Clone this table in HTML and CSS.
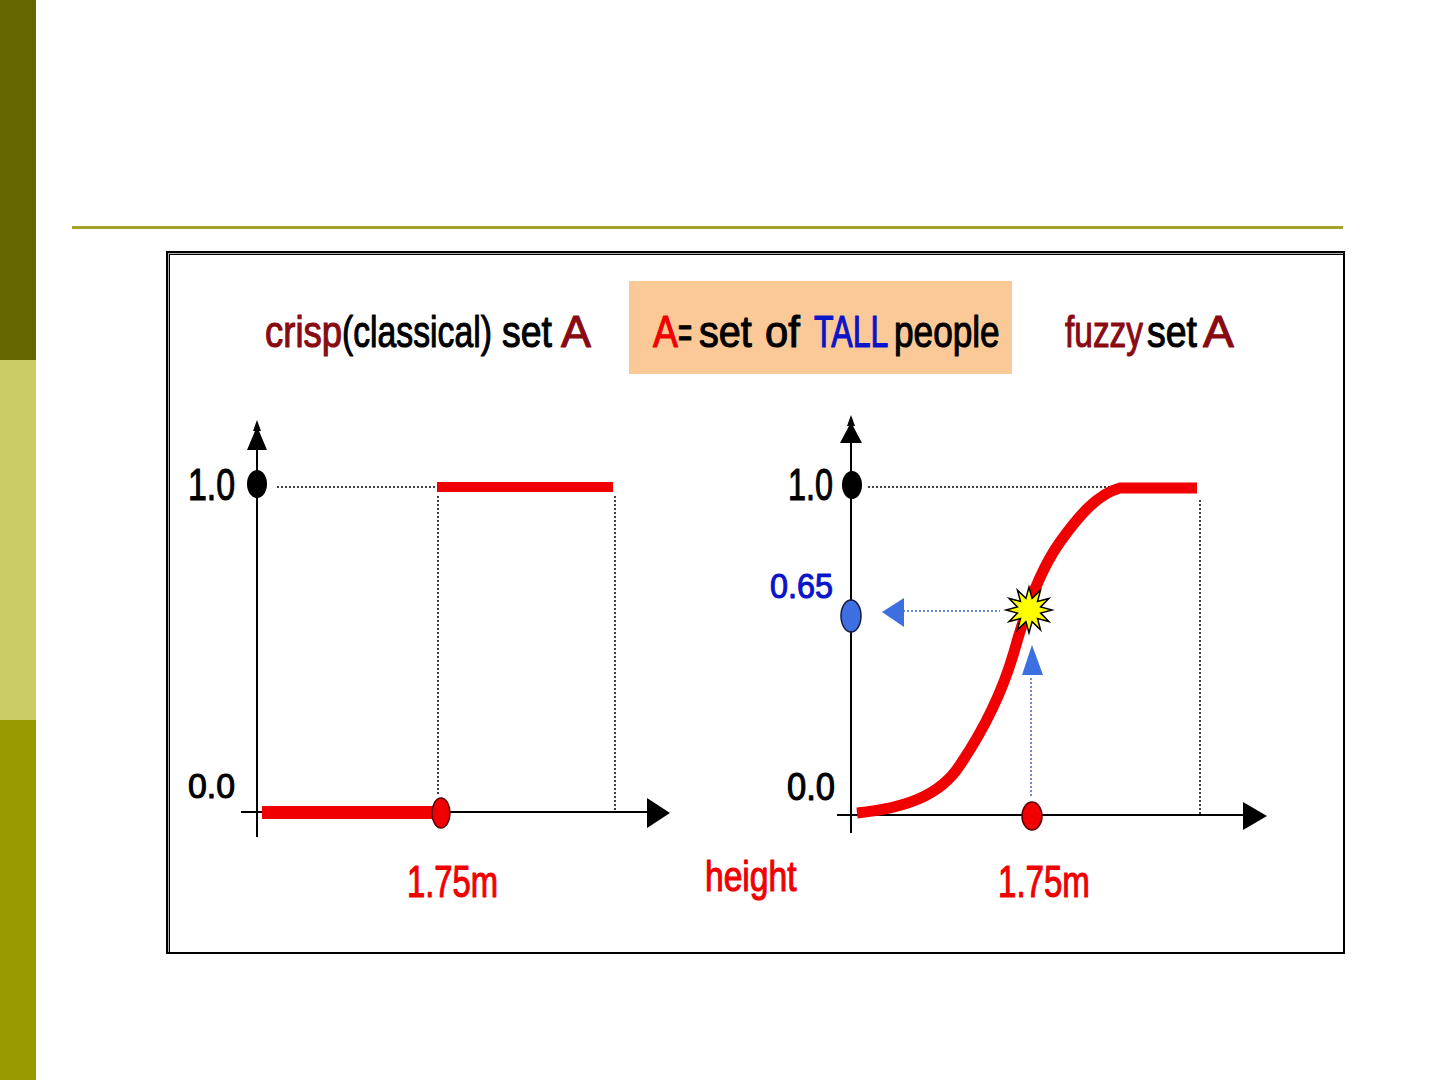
FILE: index.html
```html
<!DOCTYPE html>
<html>
<head>
<meta charset="utf-8">
<link rel="stylesheet" href="styles.css">
</head>
<body>
<div class="page">
  <div class="sidebar">
    <div class="band band-dark"></div>
    <div class="band band-light"></div>
    <div class="band band-mid"></div>
  </div>
  <div class="main">
    <div class="rule"></div>
    <div class="frame">
      <svg class="chart" width="1175" height="699" viewBox="168 253 1175 699" xmlns="http://www.w3.org/2000/svg">
        <!-- header -->
        <text class="t dred" font-size="44" transform="translate(265 347) scale(0.83 1)">crisp</text>
        <text class="t blk" font-size="44" transform="translate(342 347) scale(0.767 1)">(classical)</text>
        <text class="t blk" font-size="44" transform="translate(502 347) scale(0.85 1)">set</text>
        <text class="t dred" font-size="44" transform="translate(561 347) scale(1.02 1)">A</text>

        <rect x="629" y="281" width="383" height="93" class="peach"/>
        <text class="t red" font-size="44" transform="translate(653 347) scale(0.85 1)">A</text>
        <text class="t blk" font-size="44" transform="translate(678 347) scale(0.55 1)">=</text>
        <text class="t blk" font-size="44" transform="translate(699 347) scale(0.9 1)">set</text>
        <text class="t blk" font-size="44" transform="translate(765 347) scale(0.95 1)">of</text>
        <text class="t blue" font-size="44" transform="translate(814 347) scale(0.73 1)">TALL</text>
        <text class="t blk" font-size="44" transform="translate(894 347) scale(0.8 1)">people</text>

        <text class="t dred" font-size="44" transform="translate(1065 347) scale(0.76 1)">fuzzy</text>
        <text class="t blk" font-size="44" transform="translate(1147 347) scale(0.85 1)">set</text>
        <text class="t dred" font-size="44" transform="translate(1203 347) scale(1.05 1)">A</text>

        <!-- LEFT CHART -->
        <line x1="277" y1="487" x2="437" y2="487" class="dot"/>
        <line x1="438" y1="496" x2="438" y2="796" class="dot"/>
        <line x1="615" y1="496" x2="615" y2="811" class="dot"/>
        <line x1="257" y1="446" x2="257" y2="837" class="axis"/>
        <line x1="241" y1="812" x2="650" y2="812" class="axis"/>
        <polygon points="257,420 261,431 259,431 267,450 247,450 255,431 253,431" fill="#000"/>
        <polygon points="647,798 670,813 647,828" fill="#000"/>
        <rect x="437" y="482" width="176" height="10" fill="#f00000"/>
        <rect x="262" y="806" width="176" height="13" fill="#f00000"/>
        <ellipse cx="257" cy="484" rx="10" ry="14" fill="#000"/>
        <ellipse cx="441" cy="813" rx="9" ry="15" fill="#f00000" stroke="#5a0000" stroke-width="1.5"/>
        <text class="t blk" font-size="44" transform="translate(188 500) scale(0.77 1)">1.0</text>
        <text class="t blk" font-size="36" transform="translate(188 798) scale(0.94 1)">0.0</text>
        <text class="t red" font-size="44" transform="translate(407 897) scale(0.745 1)">1.75m</text>

        <text class="t red" font-size="42" transform="translate(705 891) scale(0.8 1)">height</text>

        <!-- RIGHT CHART -->
        <line x1="868" y1="487" x2="1112" y2="487" class="dot"/>
        <line x1="1200" y1="500" x2="1200" y2="814" class="dot"/>
        <line x1="851" y1="440" x2="851" y2="833" class="axis"/>
        <line x1="837" y1="815" x2="1246" y2="815" class="axis"/>
        <polygon points="851,415 855,426 853,426 862,443 840,443 849,426 847,426" fill="#000"/>
        <polygon points="1243,802 1267,816 1243,830" fill="#000"/>
        <path d="M857,813 C905,808 940,796 960,765 C985,728 1003,690 1014,652 C1025,612 1040,570 1060,542 C1080,514 1098,494 1120,488 L1197,488" fill="none" stroke="#f00000" stroke-width="11" stroke-linejoin="round"/>
        <line x1="903" y1="611" x2="1000" y2="611" class="bdot"/>
        <line x1="1031" y1="678" x2="1031" y2="798" class="bdot"/>
        <polygon points="882,612 904,598 904,627" class="bfill"/>
        <polygon points="1032,645 1022,675 1043,675" class="bfill"/>
        <polygon points="1029,587 1032.1,598.4 1040.5,590.1 1037.5,601.5 1048.9,598.5 1040.6,606.9 1052,610 1040.6,613.1 1048.9,621.5 1037.5,618.5 1040.5,629.9 1032.1,621.6 1029,633 1025.9,621.6 1017.5,629.9 1020.5,618.5 1009.1,621.5 1017.4,613.1 1006,610 1017.4,606.9 1009.1,598.5 1020.5,601.5 1017.5,590.1 1025.9,598.4" fill="#ffff00" stroke="#000" stroke-width="1.5" stroke-linejoin="miter"/>
        <ellipse cx="852" cy="485" rx="10" ry="14" fill="#000"/>
        <ellipse cx="851" cy="616" rx="10" ry="16" fill="#3c6fe0" stroke="#1a1a40" stroke-width="1.5"/>
        <ellipse cx="1032" cy="816" rx="10" ry="14" fill="#f00000" stroke="#5a0000" stroke-width="1.5"/>
        <text class="t blk" font-size="44" transform="translate(788 500) scale(0.735 1)">1.0</text>
        <text class="t blue" font-size="35" transform="translate(770 598) scale(0.925 1)">0.65</text>
        <text class="t blk" font-size="38" transform="translate(787 800) scale(0.91 1)">0.0</text>
        <text class="t red" font-size="44" transform="translate(998 897) scale(0.752 1)">1.75m</text>
      </svg>
    </div>
  </div>
</div>
</body>
</html>
```

FILE: styles.css
```css
html, body {
  margin: 0;
  padding: 0;
  background: #ffffff;
}
.page {
  display: flex;
  width: 1440px;
  height: 1080px;
  overflow: hidden;
}
.sidebar {
  width: 36px;
  flex: none;
  display: flex;
  flex-direction: column;
}
.band {
  flex: 1;
}
.band-dark { background: #666600; }
.band-light { background: #cccc66; }
.band-mid { background: #999900; }
.main {
  flex: 1;
  padding-top: 226px;
}
.rule {
  margin-left: 36px;
  width: 1271px;
  height: 3px;
  background: #a3a32a;
}
.frame {
  margin-top: 22px;
  margin-left: 130px;
  width: 1179px;
  height: 703px;
  box-sizing: border-box;
  border: 2px solid #000;
  box-shadow: inset 1px 1px 0 #b0b0b0, inset 2px 2px 0 #000;
  background: #fff;
}
.chart {
  display: block;
}
.t {
  font-family: "Liberation Sans", Arial, sans-serif;
  stroke-width: 1.1;
  stroke-linejoin: round;
}
.dred { fill: #8a0a12; stroke: #8a0a12; }
.blk { fill: #000; stroke: #000; }
.red { fill: #f00000; stroke: #f00000; }
.blue { fill: #0a14c8; stroke: #0a14c8; }
.peach { fill: #fbc997; }
.axis { stroke: #000; stroke-width: 2; }
.dot { stroke: #000; stroke-width: 1.5; stroke-dasharray: 2 2; }
.bdot { stroke: #3366cc; stroke-width: 1.5; stroke-dasharray: 2 2; }
.bfill { fill: #3c6fe0; }
```
